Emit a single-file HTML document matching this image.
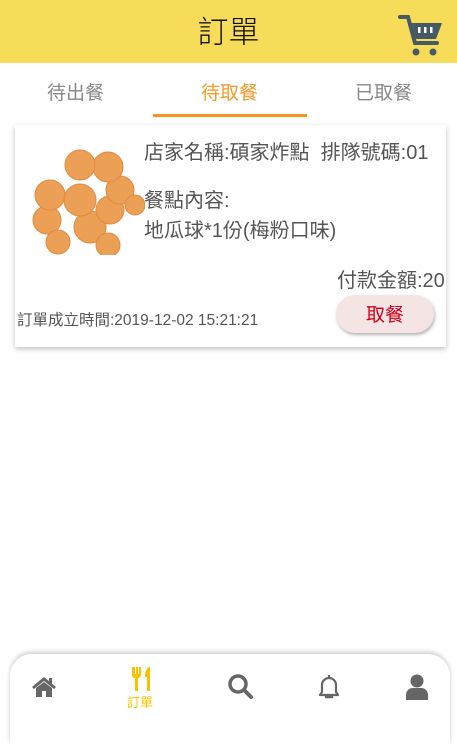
<!DOCTYPE html><html><head><meta charset="utf-8"><style>
body{margin:0;width:457px;height:730px;position:relative;background:#fff;font-family:"Liberation Sans","Noto Sans CJK TC",sans-serif;overflow:hidden}
.a{position:absolute;white-space:nowrap}
</style></head><body>
<div class="a" style="left:0;top:0;width:457px;height:63px;background:#f7dc5a"></div>
<div class="a" style="left:0;top:7px;width:457px;text-align:center;font-size:31px;color:#111;font-weight:300">訂單</div>
<svg class="a" style="left:398px;top:13px" width="46" height="45" viewBox="0 0 46 45"><path d="M2 4h8l7 26h22" fill="none" stroke="#455a64" stroke-width="4" stroke-linecap="round"/><path d="M11 10h33l-6 16H16z" fill="#455a64"/><rect x="20" y="14" width="2.5" height="6" fill="#fff"/><rect x="26" y="14" width="2.5" height="6" fill="#fff"/><rect x="32" y="14" width="2.5" height="6" fill="#fff"/><circle cx="18" cy="39" r="3.5" fill="#455a64"/><circle cx="35" cy="39" r="3.5" fill="#455a64"/></svg>
<div class="a" style="left:47px;top:78px;font-size:19px;color:#888">待出餐</div>
<div class="a" style="left:201px;top:78px;font-size:19px;color:#f79a2a">待取餐</div>
<div class="a" style="left:355px;top:78px;font-size:19px;color:#888">已取餐</div>
<div class="a" style="left:153px;top:114px;width:154px;height:3px;background:#f7931e"></div>
<div class="a" style="left:15px;top:125px;width:431px;height:222px;background:#fff;box-shadow:0 2px 5px rgba(0,0,0,.25)"></div>
<svg class="a" style="left:30px;top:145px" width="115" height="110"><g fill="#eba055" stroke="#e08a40" stroke-width="1"><circle cx="17" cy="75" r="14"/><circle cx="28" cy="97" r="12"/><circle cx="60" cy="82" r="16"/><circle cx="78" cy="100" r="12"/><circle cx="20" cy="50" r="15"/><circle cx="80" cy="65" r="14"/><circle cx="50" cy="55" r="16"/><circle cx="90" cy="45" r="14"/><circle cx="78" cy="22" r="15"/><circle cx="50" cy="20" r="15"/><circle cx="105" cy="60" r="10"/></g></svg>
<div class="a" style="left:144px;top:136px;font-size:20px;color:#555">店家名稱:碩家炸點&nbsp; 排隊號碼:01</div>
<div class="a" style="left:144px;top:184px;font-size:20px;color:#555">餐點內容:</div>
<div class="a" style="left:144px;top:214px;font-size:20px;color:#555">地瓜球*1份(梅粉口味)</div>
<div class="a" style="left:337px;top:264px;font-size:20px;color:#555">付款金額:20</div>
<div class="a" style="left:17px;top:308px;font-size:15.5px;color:#555">訂單成立時間:2019-12-02 15:21:21</div>
<div class="a" style="left:336px;top:295px;width:98px;height:38px;border-radius:19px;background:#f5e4e4;box-shadow:1px 2px 3px rgba(0,0,0,.3);text-align:center;line-height:42px;font-size:19px;color:#d0021b">取餐</div>
<div class="a" style="left:10px;top:654px;width:440px;height:90px;border-radius:22px 22px 0 0;background:#fff;box-shadow:0 -2px 5px rgba(0,0,0,.2)"></div>
<svg class="a" style="left:31px;top:675px" width="26" height="24" viewBox="0 0 26 24"><path d="M13 2 1 12l2 2 10-8 10 8 2-2z" fill="#666"/><path d="M5 13l8-6 8 6v9h-6v-6h-4v6H5z" fill="#666"/><rect x="18" y="3" width="3" height="6" fill="#666"/></svg>
<svg class="a" style="left:130px;top:666px" width="24" height="26" viewBox="0 0 24 26"><path d="M2 1v8c0 2 2 3 3 3v13h3V12c1 0 3-1 3-3V1H9v7H8V1H6v7H5V1z" fill="#f5c400"/><path d="M20 1c-3 0-5 4-5 10h2v14h3z" fill="#f5c400"/></svg>
<div class="a" style="left:127px;top:692px;font-size:13px;color:#f5c400">訂單</div>
<svg class="a" style="left:227px;top:673px" width="28" height="28"><circle cx="11" cy="11" r="8" fill="none" stroke="#666" stroke-width="3.5"/><path d="M17 17l7 7" stroke="#666" stroke-width="4" stroke-linecap="round"/></svg>
<svg class="a" style="left:316px;top:673px" width="26" height="28" viewBox="0 0 26 28"><path d="M13 2v2M6 19V12a7 7 0 0 1 14 0v7l2 3H4z" fill="none" stroke="#666" stroke-width="2.2" stroke-linejoin="round"/><path d="M10 24h6" stroke="#666" stroke-width="2.5" stroke-linecap="round"/></svg>
<svg class="a" style="left:405px;top:673px" width="24" height="28"><circle cx="12" cy="8" r="6.5" fill="#666"/><path d="M1 27v-5c0-4 3-7 7-7h8c4 0 7 3 7 7v5z" fill="#666"/></svg>
</body></html>
